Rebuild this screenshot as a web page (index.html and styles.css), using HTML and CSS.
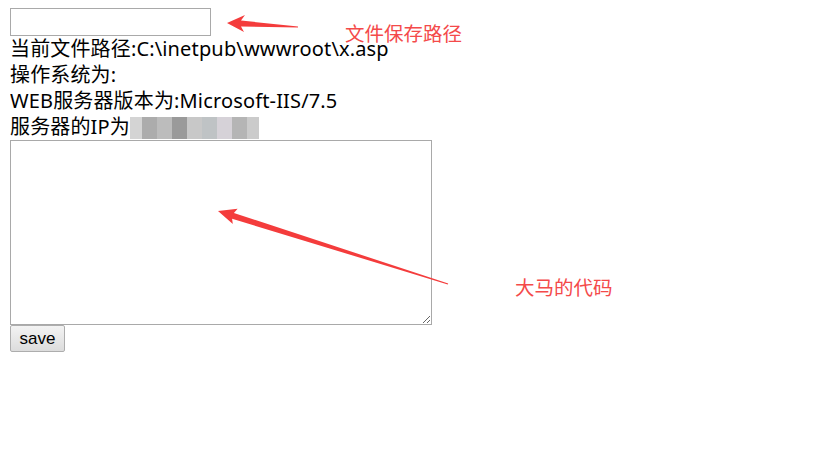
FILE: index.html
```html
<!DOCTYPE html>
<html>
<head>
<meta charset="utf-8">
<title>x.asp</title>
<link rel="stylesheet" href="styles.css">
</head>
<body>
<form class="page">
  <input class="path-input" type="text">
  <div class="line">当前文件路径:C:\inetpub\wwwroot\x.asp</div>
  <div class="line">操作系统为:</div>
  <div class="line">WEB服务器版本为:Microsoft-IIS/7.5</div>
  <div class="line">服务器的IP为<span class="blur"><i class="b1"></i><i class="b2"></i><i class="b3"></i><i class="b4"></i><i class="b5"></i><i class="b6"></i><i class="b7"></i><i class="b8"></i><i class="b9"></i></span></div>
  <textarea class="code"></textarea>
  <button class="save" type="button">save</button>
</form>

<svg class="annot" width="834" height="458" viewBox="0 0 834 458">
  <polygon fill="#f43c3c" points="227,23 245,15 241,20.5 298,26.6 298,27.4 241,26.5 244,32"/>
  <polygon fill="#f43c3c" points="218,211 237.6,208.8 233.9,212.9 448.2,283.5 447.8,284.5 232.1,218.7 232.8,224"/>
</svg>
<div class="label label-path">文件保存路径</div>
<div class="label label-code">大马的代码</div>
</body>
</html>
```

FILE: styles.css
```css
html, body {
  background: #ffffff;
}
body {
  margin: 8px 10px;
  font-family: "Noto Sans", "Noto Sans CJK SC", sans-serif;
  font-size: 20px;
  color: #000;
}
.page {
  display: flex;
  flex-direction: column;
  align-items: flex-start;
}
.path-input {
  box-sizing: border-box;
  width: 201px;
  height: 28px;
  margin: 0;
  border: 1px solid #a9a9a9;
  padding: 2px 4px;
  background: #fff;
  outline: none;
}
.line {
  height: 26px;
  line-height: 26px;
  white-space: nowrap;
  letter-spacing: 0.15px;
  font-family: "Noto Sans", "Noto Sans CJK SC", sans-serif;
}
.blur {
  display: inline-flex;
  vertical-align: top;
  margin-top: 3px;
  height: 22px;
  position: relative;
}
.blur i {
  display: block;
  width: 15px;
  height: 22px;
}
.blur .b1 { background: #d4d4d4; width: 12px; }
.blur .b2 { background: #acacac; }
.blur .b3 { background: #bcbcbc; }
.blur .b4 { background: #9a9a9a; }
.blur .b5 { background: #c8c8c8; }
.blur .b6 { background: #bfc3c5; }
.blur .b7 { background: #d6d2d8; }
.blur .b8 { background: #b5b5b5; }
.blur .b9 { background: #cbcbcb; width: 12px; }
.code {
  box-sizing: border-box;
  width: 422px;
  height: 185px;
  margin: 0;
  border: 1px solid #a9a9a9;
  resize: both;
  padding: 2px;
  font-family: "Liberation Mono", monospace;
  font-size: 13px;
}
.save {
  box-sizing: border-box;
  width: 55px;
  height: 27px;
  margin: 0;
  padding: 0 6px;
  border: 1px solid #adadad;
  border-radius: 2px;
  background: linear-gradient(#f3f3f3, #dcdcdc);
  font-family: "Liberation Sans", Arial, sans-serif;
  font-size: 17px;
  color: #000;
}
.annot {
  position: absolute;
  left: 0;
  top: 0;
  pointer-events: none;
}
.label {
  position: absolute;
  color: #f44a4a;
  font-family: "Noto Sans CJK SC", sans-serif;
  font-size: 19.5px;
  line-height: 19px;
  white-space: nowrap;
}
.label-path {
  left: 345px;
  top: 23px;
}
.label-code {
  left: 515px;
  top: 277px;
}
```
